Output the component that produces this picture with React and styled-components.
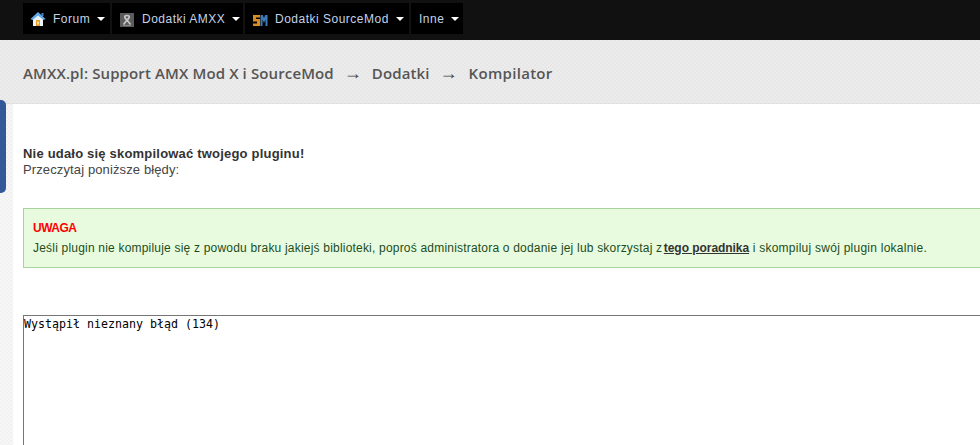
import styled, { createGlobalStyle } from "styled-components";

const GlobalStyle = createGlobalStyle`
  html, body {
    margin: 0;
    padding: 0;
    overflow: hidden;
  }
  body {
    font-family: "Liberation Sans", Arial, sans-serif;
    font-size: 13px;
    color: #333;
  }
`;

const Page = styled.div`
  width: 980px;
  height: 445px;
  overflow: hidden;
  display: flex;
  flex-direction: column;
  background: repeating-conic-gradient(#f1f1f1 0 25%, #f7f7f7 0 50%) 0 0 / 4px 4px;
`;

const TopBar = styled.nav`
  height: 40px;
  flex: none;
  box-sizing: border-box;
  background: #111;
  padding: 3px 0 0 23px;
  display: flex;
  align-items: flex-start;
  gap: 2px;
`;

const NavItem = styled.div`
  height: 31px;
  width: ${(p) => p.$width}px;
  box-sizing: border-box;
  background: #000;
  color: #c4d3e6;
  font-size: 12px;
  letter-spacing: 0.5px;
  display: flex;
  align-items: center;
  padding-left: ${(p) => p.$pad}px;
`;

const NavIcon = styled.svg`
  width: 16px;
  height: 16px;
  flex: none;
  margin-right: 7px;
`;

const Caret = styled.span`
  width: 0;
  height: 0;
  margin-left: 7px;
  border-left: 4px solid transparent;
  border-right: 4px solid transparent;
  border-top: 4px solid #fff;
`;

const Breadcrumb = styled.header`
  height: 64px;
  flex: none;
  box-sizing: border-box;
  background: repeating-conic-gradient(#e7e7e7 0 25%, #ececec 0 50%) 0 0 / 4px 4px;
  border-bottom: 1px solid #e0e0e0;
  padding: 24px 0 0 23px;
  font-family: "Open Sans", sans-serif;
  font-size: 15px;
  font-weight: 600;
  letter-spacing: 0.12px;
  line-height: 18px;
  color: #555;
  display: flex;
  gap: 10px;
`;

const Arrow = styled.span`
  font-family: "Liberation Sans", sans-serif;
  font-weight: 400;
  font-size: 18px;
  letter-spacing: 0;
  color: #444;
`;

const LastCrumb = styled.span`
  margin-left: 1px;
  letter-spacing: 0.3px;
`;

const Body = styled.div`
  flex: 1;
  position: relative;
  margin-left: 13px;
  background: #fff;
  padding: 42px 0 0 10px;
`;

const SideTab = styled.div`
  position: absolute;
  left: 0;
  top: 100px;
  width: 6px;
  height: 93px;
  background: #355898;
  border-radius: 0 5px 5px 0;
`;

const Title = styled.div`
  font-weight: 700;
  font-size: 13px;
  letter-spacing: 0.2px;
  line-height: 16px;
  color: #333;
`;

const Sub = styled.div`
  font-size: 13px;
  letter-spacing: 0.12px;
  line-height: 15px;
  color: #444;
`;

const Notice = styled.div`
  margin-top: 31px;
  height: 60px;
  box-sizing: border-box;
  background: #e8fbde;
  border: 1px solid #a8d2a0;
  border-right: none;
  padding: 12px 0 0 9px;
  font-size: 12px;
  color: #1d4d1d;
`;

const Warning = styled.div`
  font-weight: 700;
  font-size: 12px;
  letter-spacing: -0.5px;
  line-height: 15px;
  color: #f00;
`;

const NoticeText = styled.div`
  line-height: 18px;
  margin-top: 3px;
  letter-spacing: 0.2px;
`;

const GuideLink = styled.a`
  font-weight: 700;
  letter-spacing: -0.05px;
  margin-left: -2px;
  color: #333;
  text-decoration: underline;
`;

const AfterLink = styled.span`
  letter-spacing: 0.25px;
`;

const Output = styled.div`
  margin-top: 47px;
  height: 140px;
  box-sizing: border-box;
  border: 1px solid #767676;
  border-right: none;
  padding: 1px 0 0 0;
  font-family: "DejaVu Sans Mono", monospace;
  font-size: 11.63px;
  line-height: 14px;
  color: #000;
`;

function HomeIcon() {
  return (
    <NavIcon viewBox="0 0 16 16">
      <path d="M3 8 L8 3.500 L13 8 V15 H3 Z" fill="#eef3fa" />
      <rect x="6" y="9" width="4" height="6" fill="#e99a20" />
      <rect x="7.200" y="10.500" width="1.600" height="3" fill="#fff0b8" />
      <path d="M8 1 L15.500 8 L13.500 9 L8 4.500 L2.500 9 L.5 8 Z" fill="#62aaec" />
      <rect x="11.500" y="2" width="2" height="3" fill="#4a86c4" />
    </NavIcon>
  );
}

function AmxxIcon() {
  return (
    <NavIcon viewBox="0 0 16 16">
      <rect x="1" y="2" width="14" height="14" fill="#5c5c5c" />
      <path d="M8 9 C5 7 5 4.500 8 4.500 C11 4.500 11 7 8 9 L11.500 13.500 M8 9 L4.500 13.500" stroke="#c6c6c6" strokeWidth="1.700" fill="none" />
      <path d="M4 14.500h8" stroke="#888" strokeWidth="1" />
    </NavIcon>
  );
}

function SmIcon() {
  return (
    <NavIcon viewBox="0 0 16 16">
      <path d="M1 4h7v2.500H4V8h4v7H1v-2.500h4V10.500H1z" fill="#d98c22" />
      <path d="M8.500 4h2.300L12 7l1.200-3H15.500v11h-2V8.500L12 12l-1.500-3.500V15h-2z" fill="#3f7cb6" />
    </NavIcon>
  );
}

export default function App() {
  return (
    <Page>
      <GlobalStyle />
      <TopBar>
        <NavItem $width={87} $pad={7}><HomeIcon />Forum<Caret /></NavItem>
        <NavItem $width={131} $pad={7}><AmxxIcon />Dodatki AMXX<Caret /></NavItem>
        <NavItem $width={164} $pad={7}><SmIcon />Dodatki SourceMod<Caret /></NavItem>
        <NavItem $width={52} $pad={8}>Inne<Caret /></NavItem>
      </TopBar>
      <Breadcrumb>
        <span>AMXX.pl: Support AMX Mod X i SourceMod</span>
        <Arrow>→</Arrow>
        <span>Dodatki</span>
        <Arrow>→</Arrow>
        <LastCrumb>Kompilator</LastCrumb>
      </Breadcrumb>
      <SideTab />
      <Body>
        <Title>Nie udało się skompilować twojego pluginu!</Title>
        <Sub>Przeczytaj poniższe błędy:</Sub>
        <Notice>
          <Warning>UWAGA</Warning>
          <NoticeText>
            Jeśli plugin nie kompiluje się z powodu braku jakiejś biblioteki, poproś administratora o dodanie jej lub skorzystaj z <GuideLink>tego poradnika</GuideLink><AfterLink> i skompiluj swój plugin lokalnie.</AfterLink>
          </NoticeText>
        </Notice>
        <Output>Wystąpił nieznany błąd (134)</Output>
      </Body>
    </Page>
  );
}
